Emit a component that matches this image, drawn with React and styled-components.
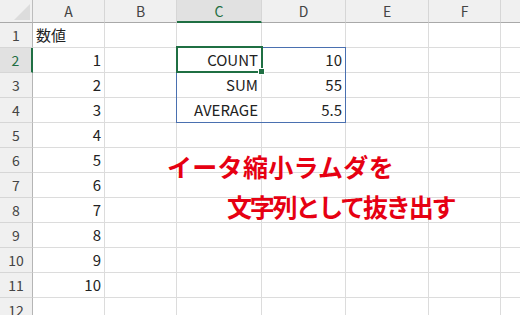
import React from 'react';
import styled, { createGlobalStyle, css } from 'styled-components';

const GlobalStyle = createGlobalStyle`
  html, body {
    margin: 0;
    padding: 0;
    background: #ffffff;
    overflow: hidden;
  }
  body {
    font-family: "Noto Sans CJK JP", "Noto Sans", sans-serif;
  }
`;

const GREEN = '#1f6f43';
const GRID = '#dcdcdc';

const COLS = ['A', 'B', 'C', 'D', 'E', 'F', 'G'];
const WIDTHS = [33, 72, 72, 85, 84, 83, 72, 72];

// cell values keyed by "col+row"
const VALUES = {
  A1: { v: '数値', align: 'left' },
  C2: { v: 'COUNT' },
  C3: { v: 'SUM' },
  C4: { v: 'AVERAGE' },
  D2: { v: '10' },
  D3: { v: '55' },
  D4: { v: '5.5' },
};
for (let i = 1; i <= 10; i++) VALUES[`A${i + 1}`] = { v: String(i) };

const Sheet = styled.div`
  position: relative;
  display: grid;
  grid-template-columns: ${WIDTHS.map(w => `${w}px`).join(' ')};
  grid-template-rows: 23px repeat(12, 25px);
  width: max-content;
`;

const Corner = styled.div`
  position: relative;
  background: #f0f0f0;
  border-right: 1px solid #bdbdbd;
  border-bottom: 1px solid #a9a9a9;
  box-sizing: border-box;

  &::after {
    content: '';
    position: absolute;
    right: 2px;
    bottom: 2px;
    width: 16px;
    height: 16px;
    background: #dcdcdc;
    clip-path: polygon(100% 0, 100% 100%, 0 100%);
  }
`;

const ColHeader = styled.div`
  display: flex;
  align-items: center;
  justify-content: center;
  box-sizing: border-box;
  background: #f0f0f0;
  border-right: 1px solid #d6d6d6;
  border-bottom: 1px solid #a9a9a9;
  color: #444;
  font-size: 14px;
  padding-bottom: 1px;

  ${p =>
    p.$selected &&
    css`
      background: #e1e1e1;
      color: ${GREEN};
      border-bottom: 2px solid ${GREEN};
      padding-bottom: 0;
    `}
`;

const RowHeader = styled.div`
  display: flex;
  align-items: center;
  justify-content: center;
  box-sizing: border-box;
  background: #f0f0f0;
  border-right: 1px solid #b5b5b5;
  border-bottom: 1px solid #d6d6d6;
  color: #444;
  font-size: 14px;

  ${p =>
    p.$selected &&
    css`
      background: #e1e1e1;
      color: ${GREEN};
      border-right: 2px solid ${GREEN};
    `}
`;

const Cell = styled.div`
  display: flex;
  align-items: center;
  justify-content: ${p => (p.$align === 'left' ? 'flex-start' : 'flex-end')};
  box-sizing: border-box;
  padding: 0 3px 1px;
  border-right: 1px solid ${GRID};
  border-bottom: 1px solid ${GRID};
  color: #222;
  font-size: 15px;
  white-space: nowrap;
`;

// selection outlines drawn on top of the grid
const RangeBox = styled.div`
  position: absolute;
  left: 176px;
  top: 47px;
  width: 170px;
  height: 76px;
  box-sizing: border-box;
  border: 1px solid #4a70b0;
  pointer-events: none;
`;

const ActiveBox = styled.div`
  position: absolute;
  left: 176px;
  top: 46px;
  width: 87px;
  height: 27px;
  box-sizing: border-box;
  border: 2px solid ${GREEN};
  pointer-events: none;
`;

const FillHandle = styled.div`
  position: absolute;
  right: -4px;
  bottom: -4px;
  width: 7px;
  height: 7px;
  box-sizing: border-box;
  background: ${GREEN};
  border: 1px solid #ffffff;
`;

// floating red note over the sheet
const Caption = styled.div`
  position: absolute;
  left: 167px;
  top: 146px;
  color: #e60012;
  font-size: 25px;
  font-weight: 700;
  line-height: 40px;
  white-space: nowrap;
  pointer-events: none;
`;

const CaptionLine = styled.span`
  display: block;
  padding-left: ${p => p.$indent || 0}px;
  letter-spacing: ${p => p.$spacing || 0}px;
`;

const App = () => {
  const rows = Array.from({ length: 12 }, (_, i) => i + 1);

  return (
    <>
      <GlobalStyle />
      <Sheet>
        <Corner />
        {COLS.map(c => (
          <ColHeader key={c} $selected={c === 'C'}>
            {c === 'G' ? '' : c}
          </ColHeader>
        ))}

        {rows.map(r => (
          <React.Fragment key={r}>
            <RowHeader $selected={r === 2}>{r}</RowHeader>
            {COLS.map(c => {
              const cell = VALUES[`${c}${r}`];
              return (
                <Cell key={c} $align={cell?.align}>
                  {cell?.v}
                </Cell>
              );
            })}
          </React.Fragment>
        ))}

        <RangeBox />
        <ActiveBox>
          <FillHandle />
        </ActiveBox>

        <Caption>
          <CaptionLine $spacing={0.3}>イータ縮小ラムダを</CaptionLine>
          <CaptionLine $indent={60} $spacing={-2.2}>
            文字列として抜き出す
          </CaptionLine>
        </Caption>
      </Sheet>
    </>
  );
};

export default App;
